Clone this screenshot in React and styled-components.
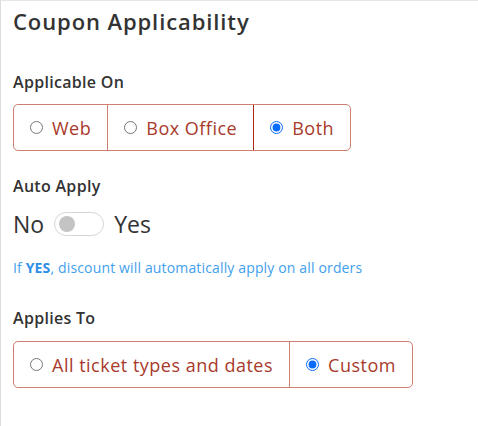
import styled, { createGlobalStyle } from "styled-components";
import { useState } from "react";

const GlobalStyle = createGlobalStyle`
  body {
    margin: 0;
    background: #fff;
    font-family: "Open Sans", "Noto Sans", sans-serif;
  }
`;

const Panel = styled.div`
  box-sizing: border-box;
  width: 478px;
  height: 426px;
  border-top: 1px solid #e6e6e6;
  border-left: 1px solid #dcdcdc;
  padding: 6px 12px;
`;

const Title = styled.h2`
  margin: 0 0 36px;
  font-size: 22px;
  line-height: 28px;
  font-weight: 600;
  letter-spacing: 0.9px;
  color: #333;
`;

const Label = styled.div`
  font-size: 16px;
  line-height: 22px;
  font-weight: 600;
  letter-spacing: 0.3px;
  color: #333;
  margin-bottom: ${(p) => p.space || 11}px;
`;

const Section = styled.div`
  margin-bottom: ${(p) => p.gap || 24}px;
`;

const Group = styled.div`
  display: inline-flex;
  border: 1px solid #cf7e72;
  border-radius: 5px;
  overflow: hidden;
`;

const Option = styled.label`
  display: flex;
  align-items: center;
  gap: 9px;
  height: 45px;
  padding: 0 16px 0 16px;
  font-size: 18px;
  letter-spacing: 0.5px;
  color: #a83a2c;
  cursor: pointer;
  border-left: 1px solid ${(p) => (p.checked && p.strong ? "#b1261a" : "#cf7e72")};

  &:first-child {
    border-left: none;
  }

  input {
    margin: 0;
    width: 13px;
    height: 13px;
    accent-color: #0a6cff;
  }
`;

const ToggleRow = styled.div`
  display: flex;
  align-items: center;
  gap: 10px;
  font-size: 23px;
  color: #333;
  margin-bottom: 19px;
`;

const Switch = styled.button`
  position: relative;
  width: 50px;
  height: 24px;
  border: 1px solid #d6d6d6;
  border-radius: 12px;
  background: #fff;
  padding: 0;
  cursor: pointer;

  &::after {
    content: "";
    position: absolute;
    top: 3px;
    left: ${(p) => (p.on ? "29px" : "4px")};
    width: 16px;
    height: 16px;
    border-radius: 50%;
    background: ${(p) => (p.on ? "#1e88e5" : "#c4c4c4")};
  }
`;

const Hint = styled.p`
  margin: 0;
  font-size: 14px;
  line-height: 18px;
  letter-spacing: 0.15px;
  color: #42a0ee;

  b {
    font-weight: 700;
    color: #2f8fe6;
  }
`;

function Segmented({ name, options, value, onChange, strong }) {
  return (
    <Group>
      {options.map((opt) => (
        <Option key={opt} checked={value === opt} strong={strong}>
          <input
            type="radio"
            name={name}
            checked={value === opt}
            onChange={() => onChange(opt)}
          />
          {opt}
        </Option>
      ))}
    </Group>
  );
}

export default function App() {
  const [on, setOn] = useState("Both");
  const [auto, setAuto] = useState(false);
  const [to, setTo] = useState("Custom");

  return (
    <Panel>
      <GlobalStyle />
      <Title>Coupon Applicability</Title>
      <Section gap={24}>
        <Label>Applicable On</Label>
        <Segmented
          name="on"
          options={["Web", "Box Office", "Both"]}
          value={on}
          onChange={setOn}
          strong
        />
      </Section>
      <Section gap={30}>
        <Label>Auto Apply</Label>
        <ToggleRow>
          No
          <Switch on={auto} onClick={() => setAuto(!auto)} aria-label="Auto apply" />
          Yes
        </ToggleRow>
        <Hint>
          If <b>YES</b>, discount will automatically apply on all orders
        </Hint>
      </Section>
      <Section>
        <Label space={12}>Applies To</Label>
        <Segmented
          name="to"
          options={["All ticket types and dates", "Custom"]}
          value={to}
          onChange={setTo}
        />
      </Section>
    </Panel>
  );
}
